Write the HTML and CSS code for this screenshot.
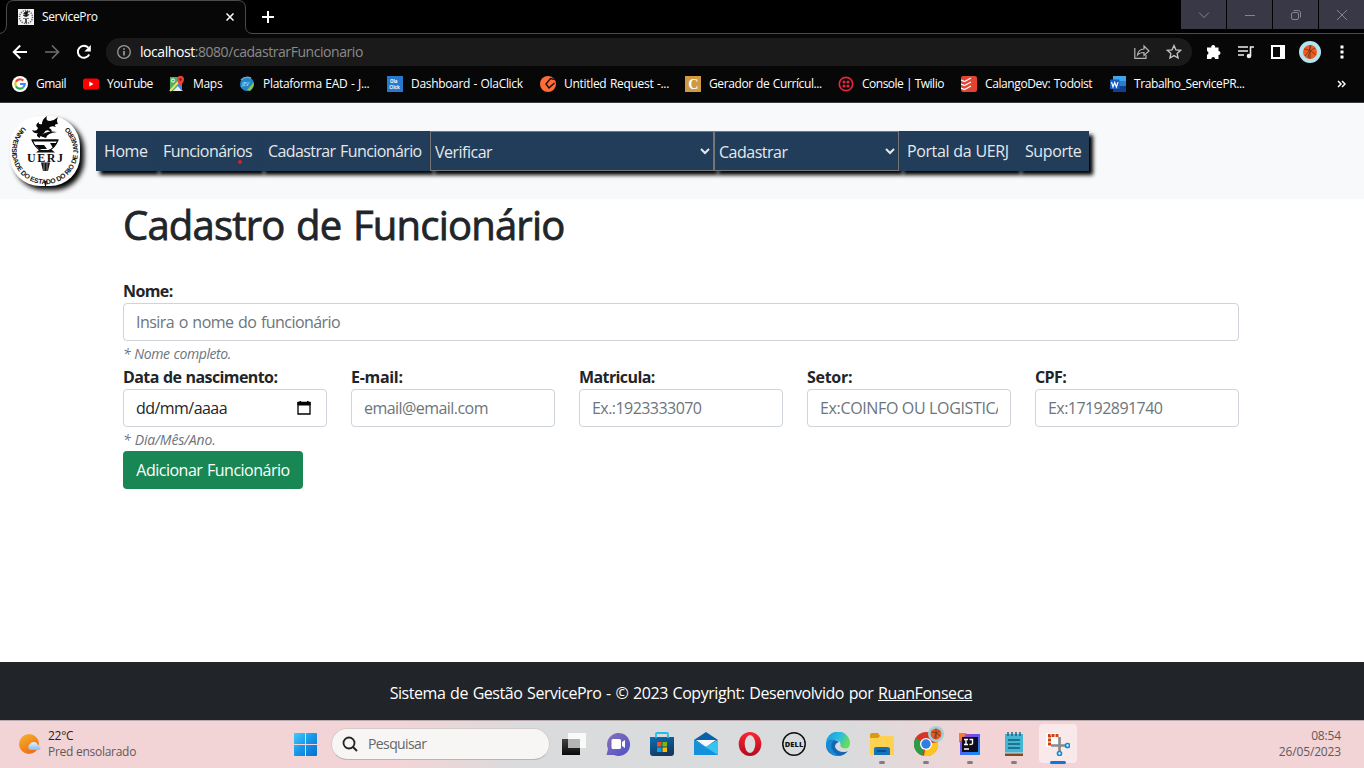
FILE: index.html
```html
<!DOCTYPE html>
<html lang="pt-BR">
<head>
<meta charset="utf-8">
<title>ServicePro</title>
<link rel="stylesheet" href="styles.css">
</head>
<body>
<div class="screen">
  <div class="tabstrip">
    <svg class="tab-shape" width="262" height="34" viewBox="0 0 262 34"><path d="M0 33.5Q6.500 32 6.500 25V8Q6.500 .5 14 .5H238Q245.500 .5 245.500 8V26Q245.500 33.500 253 33.500H262V34H0Z" fill="#070707"/><path d="M0 33.500Q6.500 32 6.500 25V8Q6.500 .5 14 .5H238Q245.500 .5 245.500 8V26Q245.500 33.500 253 33.500H262" fill="none" stroke="#4b4b4b"/></svg>
    <div class="tab">
      <svg width="16" height="16" viewBox="0 0 16 16"><rect width="16" height="16" fill="#f2f2f2"/><circle cx="8" cy="8" r="6.500" fill="none" stroke="#666" stroke-width="1.500" stroke-dasharray="1.200 1"/><path d="M5.500 4.500q2-3 5-2L9 5.500h2l-2 2H7L5 6h3zM5 9.500h6M7.500 10v4h1v-4" fill="#111" stroke="#333" stroke-width=".6"/></svg>
      <span class="tab-title">ServicePro</span>
      <svg class="tab-close" width="8" height="8" viewBox="0 0 8 8"><path d="M.5 .5l7 7M7.500 .5l-7 7" stroke="#fff" stroke-width="1.500"/></svg>
      <svg class="tab-new" width="12" height="12" viewBox="0 0 12 12"><path d="M6 0v12M0 6h12" stroke="#fff" stroke-width="2"/></svg>
    </div>
    <div class="winbuttons">
      <span><svg width="12" height="12"><path d="M1 3.500l5 5 5-5" /></svg></span>
      <span><svg width="12" height="12"><path d="M1 6.500h10"/></svg></span>
      <span><svg width="12" height="12"><rect x="1.500" y="3.500" width="7" height="7" rx="1.500"/><path d="M3.500 1.500H8Q10.500 1.500 10.500 4V8.500"/></svg></span>
      <span><svg width="12" height="12"><path d="M1 1l10 10M11 1L1 11"/></svg></span>
    </div>
  </div>

  <div class="toolbar">
    <svg width="16" height="16" viewBox="0 0 16 16" fill="none" stroke="#fff" stroke-width="1.900"><path d="M15 8H2M8.200 1.500L1.700 8l6.500 6.500"/></svg>
    <svg width="16" height="16" viewBox="0 0 16 16" fill="none" stroke="#6d6d6d" stroke-width="1.700"><path d="M1 8h13M8 1.500L14.500 8 8 14.500"/></svg>
    <svg width="16" height="16" viewBox="0 0 16 16"><path d="M13.200 10.500A6 6 0 1 1 12.300 3.700" fill="none" stroke="#fff" stroke-width="2"/><path d="M14.800 1v6.500H8.300z" fill="#fff"/></svg>
    <div class="omnibox">
      <svg width="16" height="16" viewBox="0 0 16 16"><circle cx="8" cy="8" r="6.300" fill="none" stroke="#9a9a9a" stroke-width="1.300"/><path d="M8 7v4.500M8 4.200v1.600" stroke="#aaa" stroke-width="1.500"/></svg>
      <span class="url"><b>localhost</b>:8080/cadastrarFuncionario</span>
      <svg class="share" width="16" height="16" viewBox="0 0 16 16" fill="none" stroke="#b5b5b5" stroke-width="1.200"><path d="M.8 4V14.300H12V11"/><path d="M3.500 11Q4 5.500 10 5V2l5 5-5 4.500V8.500Q5.500 8.500 3.500 11z"/></svg>
      <svg width="16" height="16" viewBox="0 0 16 16"><path d="M8 1.500l1.900 4.300 4.700.5-3.500 3.100 1 4.600L8 11.600 3.900 14l1-4.600L1.400 6.300l4.700-.5z" fill="none" stroke="#c4c4c4" stroke-width="1.300"/></svg>
    </div>
    <div class="actions">
      <svg width="16" height="16" viewBox="0 0 16 16"><path d="M1 3.500h4.300a2 2 0 1 1 3.800 0H12.500V7a2 2 0 1 1 0 4v4H9.100a1.900 1.900 0 0 0-3.800 0H1v-4.200a1.900 1.900 0 0 0 0-3.700z" fill="#fff"/></svg>
      <svg width="16" height="16" viewBox="0 0 16 16"><path d="M0 3h10M0 7h10M0 11h6M12.500 12V3H16" stroke="#eee" stroke-width="1.600" fill="none"/><circle cx="11" cy="12" r="2.300" fill="#eee"/></svg>
      <svg class="panel" width="14" height="14" viewBox="0 0 14 14"><path d="M0 0h14v14H0zM2 2v10h7V2z" fill="#fff" fill-rule="evenodd"/></svg>
      <svg class="avatar" width="22" height="22" viewBox="0 0 22 22"><circle cx="11" cy="11" r="11" fill="#b4e4ef"/><circle cx="11" cy="11" r="7" fill="#f05a1a"/><path d="M5 8q7 0 12 6M9 17Q10 9 16 7M11 4v14M6 15Q11 11 12 4" fill="none" stroke="#6d3a25" stroke-width=".9"/></svg>
      <svg class="dots" width="4" height="14" viewBox="0 0 4 14"><path d="M.5 .5h3v3h-3zM.5 5.500h3v3h-3zM.5 10.500h3v3h-3z" fill="#fff"/></svg>
    </div>
  </div>

  <div class="bookmarks">
    <span><svg viewBox="0 0 16 16"><circle cx="8" cy="8" r="8" fill="#fff"/><g fill="none" stroke-width="2.200"><path d="M11.300 4.600A4.700 4.700 0 0 0 3.900 5.700" stroke="#ea4335"/><path d="M3.900 5.700a4.700 4.700 0 0 0 0 4.600" stroke="#fbbc05"/><path d="M3.900 10.300a4.700 4.700 0 0 0 7.200 1.200" stroke="#34a853"/><path d="M11.100 11.500Q12.700 10 12.700 8H8" stroke="#4285f4"/></g></svg><i class="tight">Gmail</i></span>
    <span><svg viewBox="0 0 16 16"><rect y="2.500" width="16" height="11" rx="2.500" fill="#f00"/><path d="M6.300 5.500L10.500 8l-4.200 2.500z" fill="#fff"/></svg><i class="tight">YouTube</i></span>
    <span><svg viewBox="0 0 16 16"><path d="M1 1h12v14H1z" fill="#4caf64"/><path d="M4 15l5-5 5 5z" fill="#eee"/><path d="M7 8l6-4v11z" fill="#4285f4"/><path d="M1 15L12 3" stroke="#fdd663" stroke-width="2"/><circle cx="4" cy="4.500" r="1.600" fill="none" stroke="#fff"/><path d="M8 3.300a3.500 3.500 0 0 1 7 0Q15 6 11.500 10 8 6 8 3.300" fill="#ea4335"/><circle cx="11.500" cy="3.500" r="1.200" fill="#811"/></svg><i>Maps</i></span>
    <span><svg viewBox="0 0 16 16"><circle cx="8" cy="8" r="7" fill="#2486ca"/><path d="M11 15Q15 12 15 6L8 14z" fill="#8bc34a"/><path d="M2 4Q6 0 12 2" fill="none" stroke="#68a8cf" stroke-width="1.500"/><text x="3" y="9.500" font-size="5" fill="#d8f0ff" font-style="italic">JEV</text></svg><i>Plataforma EAD - J...</i></span>
    <span><svg viewBox="0 0 16 16"><path d="M0 0h16v16H0z" fill="#2878cd"/><text x="3" y="6.500" font-size="4.400" font-weight="700" fill="#fff">Ola</text><text x="2.300" y="12.500" font-size="4.400" font-weight="700" fill="#fff">Click</text></svg><i class="mid">Dashboard - OlaClick</i></span>
    <span><svg viewBox="0 0 16 16"><circle cx="8" cy="8" r="8" fill="#ff6c37"/><path d="M15 3.500L10.500 2.500 6 8l3 4 5.500-5M9 12l3-3" fill="none" stroke="#1a1210" stroke-width="1.400"/></svg><i>Untitled Request -...</i></span>
    <span><svg viewBox="0 0 16 16"><path d="M0 0h16v16H0z" fill="#d19a42"/><text class="serif" x="3.300" y="13" font-size="14" font-weight="700" fill="#fff">C</text></svg><i class="snug">Gerador de Currícul...</i></span>
    <span><svg viewBox="0 0 16 16"><circle cx="8" cy="8" r="6.700" fill="none" stroke="#e1283f" stroke-width="1.700"/><g fill="#e1283f"><circle cx="6" cy="6" r="1.600"/><circle cx="10" cy="6" r="1.600"/><circle cx="6" cy="10" r="1.600"/><circle cx="10" cy="10" r="1.600"/></g></svg><i class="tight">Console | Twilio</i></span>
    <span><svg viewBox="0 0 16 16"><rect width="16" height="16" rx="2" fill="#e44332"/><path d="M0 4l3.500 1.500L10 2M0 8l3.500 1.500L10 6M0 12l3.500 1.500L10 10" fill="none" stroke="#fff" stroke-width="1.200"/></svg><i class="snug">CalangoDev: Todoist</i></span>
    <span><svg viewBox="0 0 16 16"><path d="M3 0h13v5H3z" fill="#41a5ee"/><path d="M3 5h13v5H3z" fill="#2b7cd3"/><path d="M3 10h13v6H3z" fill="#103f91"/><path d="M0 3.500h9.500V13H0z" fill="#185abd"/><path d="M1.500 6l1.500 5 1.700-4.500L6.400 11 8 6" fill="none" stroke="#fff" stroke-width="1.200"/></svg><i class="snug">Trabalho_ServicePR...</i></span>
    <svg class="more" viewBox="0 0 9 8"><path d="M1 1l3 3-3 3M5 1l3 3-3 3" fill="none" stroke="#fff" stroke-width="1.500"/></svg>
  </div>

  <header class="site-header">
    <svg class="logo" width="70" height="70" viewBox="0 0 70 70">
      <defs><path id="ring" d="M13 10.500A33 33 0 1 0 57 10.500"/></defs>
      <text class="ring-text" textLength="158" lengthAdjust="spacing"><textPath href="#ring">UNIVERSIDADE DO ESTADO DO RIO DE JANEIRO</textPath></text>
      <path d="M22 14Q27 16 28 12 24 9 29 6 28 9 32 8 32 3 37 0 35 5 40 5 45 4 48 1 46 5 48 8 43 8 46 11 41 9 39 12 43 14 41 16 36 12 34 17 29 20 30 22 25 20 28 17 24 18 22 14zM30 20Q37 14 47 16 37 17 36 22z" fill="#080808"/>
      <path d="M22 24H48L46 28Q42 35 35 35 28 35 24 28z" fill="#fff" stroke="#080808" stroke-width="1.200"/><path d="M22 24.500H48" stroke="#080808" stroke-width="2"/><path d="M25 29h9l3 4h-8zM40 27h7l-4 5z" fill="#080808"/><path d="M29 34H42L45 36.500H26z" fill="#111"/>
      <text class="logo-name" x="17" y="45.500" textLength="36">UERJ</text>
      <path d="M31 46.500H40L38 55H33zM34 65h3l-1 5h-1z" fill="#151515"/><path d="M34 47v8M37 47v8" stroke="#888"/>
    </svg>
    <nav class="nav">
      <a class="n1"><span>Home</span></a>
      <a class="n2"><span>Funcionários</span></a>
      <a class="n3"><span>Cadastrar Funcionário</span></a>
      <div class="n4"><select><option>Verificar</option></select></div>
      <div class="n5"><select><option>Cadastrar</option></select></div>
      <a class="n6"><span>Portal da UERJ</span></a>
      <a class="n7"><span>Suporte</span></a>
      <i class="marker"></i>
    </nav>
  </header>

  <main class="content">
    <h1><span>Cadastro de Funcionário</span></h1>
    <div class="field">
      <label><span>Nome:</span></label>
      <input placeholder="Insira o nome do funcionário">
      <small><span>* Nome completo.</span></small>
    </div>
    <div class="row">
      <div class="field">
        <label><span>Data de nascimento:</span></label>
        <div class="date"><span>dd/mm/aaaa</span><svg width="14" height="14" viewBox="0 0 14 14"><path d="M1 1.500h12V13H1z" fill="none" stroke="#000" stroke-width="1.300"/><path d="M.5 1h13v3.500H.5zM2.500 0h1.600v2H2.500zM10 0h1.600v2H10z"/></svg></div>
        <small class="hint-date"><span>* Dia/Mês/Ano.</span></small>
      </div>
      <div class="field"><label class="loose"><span>E-mail:</span></label><input placeholder="email@email.com"></div>
      <div class="field"><label><span>Matricula:</span></label><input placeholder="Ex.:1923333070"></div>
      <div class="field"><label class="loose"><span>Setor:</span></label><input class="sector" placeholder="Ex:COINFO OU LOGISTICA"></div>
      <div class="field"><label><span>CPF:</span></label><input placeholder="Ex:17192891740"></div>
    </div>
    <button class="submit">Adicionar Funcionário</button>
  </main>

  <footer class="site-footer"><span>Sistema de Gestão ServicePro - © 2023 Copyright: Desenvolvido por <u>RuanFonseca</u></span></footer>

  <div class="taskbar">
    <div class="weather">
      <svg width="24" height="24" viewBox="0 0 24 24"><defs><linearGradient id="sun" x2=".6" y2="1"><stop stop-color="#f5b62c"/><stop offset="1" stop-color="#ee6c14"/></linearGradient><linearGradient id="cl" x2="0" y2="1"><stop stop-color="#e3f3ff"/><stop offset="1" stop-color="#86b9f3"/></linearGradient></defs><circle cx="11" cy="11" r="10" fill="url(#sun)"/><path d="M12 17a3.500 3.500 0 0 1 0-6 4.500 4.500 0 0 1 8 1 2.500 2.500 0 0 1 0 5z" fill="url(#cl)"/></svg>
      <div class="weather-text"><p class="temp">22°C</p><p class="cond">Pred ensolarado</p></div>
    </div>
    <svg class="start" width="23" height="23" viewBox="0 0 23 23"><defs><linearGradient id="win" x2="1" y2="1"><stop stop-color="#42cbfa"/><stop offset=".5" stop-color="#1696e8"/><stop offset="1" stop-color="#0670cf"/></linearGradient></defs><path d="M0 1q0-1 1-1h10v11H0zM12 0h10q1 0 1 1v10H12zM0 12h11v11H1q-1 0-1-1zM12 12h11v10q0 1-1 1H12z" fill="url(#win)"/></svg>
    <div class="search"><svg width="16" height="16" viewBox="0 0 16 16"><circle cx="7" cy="7" r="5.500" fill="none" stroke="#242424" stroke-width="1.800"/><path d="M11 11l4 4" stroke="#242424" stroke-width="2"/></svg><span>Pesquisar</span></div>
    <div class="apps">
      <span><svg viewBox="0 0 24 24"><defs><linearGradient id="tv" x2="0" y2="1"><stop stop-color="#42433e"/><stop offset="1" stop-color="#090909"/></linearGradient></defs><path d="M0 7h18v16H0z" fill="url(#tv)"/><path d="M6 1h18v15H6z" fill="#fff" fill-opacity=".82"/><path d="M6 7h12v9H6z" fill="#b4b4b4"/></svg></span>
      <span><svg viewBox="0 0 24 24"><defs><linearGradient id="ch" x2="1" y2="1"><stop stop-color="#8a72b8"/><stop offset="1" stop-color="#4c50ca"/></linearGradient></defs><path d="M.5 23L2 17A11.500 11.500 0 1 1 8 23z" fill="url(#ch)"/><rect x="5.500" y="7" width="9.500" height="10" rx="1.500" fill="#fff"/><path d="M16 10l3-2v8l-3-2z" fill="#fff"/></svg></span>
      <span><svg viewBox="0 0 24 24"><defs><linearGradient id="st" x2=".4" y2="1"><stop stop-color="#0871b5"/><stop offset="1" stop-color="#173765"/></linearGradient></defs><path d="M0 5h24v16q0 3-3 3H3q-3 0-3-3z" fill="url(#st)"/><path d="M6 6V2q0-1 1-1h10q1 0 1 1v4" fill="none" stroke="#24bce9" stroke-width="1.800"/><path d="M7 10h4.500v4.500H7z" fill="#f25022"/><path d="M12.500 10H17v4.500h-4.500z" fill="#7fba00"/><path d="M7 15.500h4.500V20H7z" fill="#00a4ef"/><path d="M12.500 15.500H17V20h-4.500z" fill="#ffb900"/></svg></span>
      <span><svg viewBox="0 0 24 24"><path d="M0 8L12 0l12 8-12 7z" fill="#0961ac"/><path d="M2 8h20L12 15z" fill="#f8f8f8"/><path d="M0 8l12 7 12-7v15H0z" fill="#29aee9"/><path d="M0 8l24 15H0z" fill="#1491da"/><path d="M12 15L24 8v15z" fill="#35c3f2"/></svg></span>
      <span><svg viewBox="0 0 24 24"><defs><linearGradient id="op" x2="0" y2="1"><stop stop-color="#fc2434"/><stop offset="1" stop-color="#b40b1d"/></linearGradient></defs><ellipse cx="12" cy="12" rx="11.300" ry="12" fill="url(#op)"/><ellipse cx="12" cy="12" rx="5.300" ry="9" fill="#dbdcdd"/></svg></span>
      <span><svg viewBox="0 0 24 24"><circle cx="12" cy="12" r="11.200" fill="none" stroke="#111" stroke-width="1.500"/><text x="2.700" y="14.800" font-size="7.500" font-weight="800" textLength="18.600" fill="#111">DELL</text></svg></span>
      <span><svg viewBox="0 0 24 24"><defs><linearGradient id="ed" x2="1" y2=".4"><stop stop-color="#1699db"/><stop offset=".6" stop-color="#29bde0"/><stop offset="1" stop-color="#68db5c"/></linearGradient></defs><path d="M0 12A12 12 0 0 1 24 11Q24 16.500 19 16.500 14 16 14.500 13 15 8 8 8 2 8 0 12z" fill="url(#ed)"/><path d="M0 12Q2 7 8 8 12 8.500 13 10 9 11 9 15 11 20 18 20 21 20 22.500 18.500 18 24 12 24 0 23 0 12z" fill="#1267b8"/><path d="M0 12Q2 7.500 8 8 3.500 13 6.500 18 9 22.500 14 23.800 8 25 3 20 0 16 0 12z" fill="#178cd5"/></svg></span>
      <span class="running"><svg viewBox="0 0 24 24"><path d="M0 3q0-2 2-2h6l2 3H22q2 0 2 2v17H0z" fill="#ffd153"/><path d="M0 3q0-2 2-2h6l2 3-2 2H0z" fill="#d99b16"/><path d="M4 23v-6q0-2 2-2h11q3 0 3 2v6z" fill="#1472b9"/><path d="M7 18h9v2H7z" fill="#0a4f8d"/></svg></span>
      <span class="running"><svg viewBox="0 0 24 24"><circle cx="12" cy="12" r="12" fill="#d93428"/><path d="M1.600 6L12 12 8 23.500A12 12 0 0 1 1.600 6z" fill="#2d9a48"/><path d="M12 12l12-2a12 12 0 0 1-14 14z" fill="#fbc61f"/><circle cx="12" cy="12" r="6" fill="#fff"/><circle cx="12" cy="12" r="4.700" fill="#2f7de2"/></svg><svg class="badge" viewBox="0 0 22 22"><circle cx="11" cy="11" r="11" fill="#9fd0d8"/><circle cx="11" cy="11" r="7.500" fill="#e8581f"/><path d="M5 8q7 0 12 6M9 17Q10 9 16 7M11 4v14" fill="none" stroke="#51342b"/></svg></span>
      <span class="running"><svg viewBox="0 0 24 24"><defs><linearGradient id="ij" x2=".7" y2="1"><stop stop-color="#c342a4"/><stop offset=".4" stop-color="#6551ef"/><stop offset="1" stop-color="#1688f7"/></linearGradient></defs><path d="M2 2h20v21H2z" fill="url(#ij)"/><path d="M1 1h8L1 11z" fill="#f3793a"/><path d="M4 5h16v15H4z" fill="#100d18"/><path d="M6 7.500h4M8 7.500v5M6 12.500h4M11.500 7.500h3v4q0 1-3 1" fill="none" stroke="#fff" stroke-width="1.400"/><path d="M6 17h5" stroke="#fff" stroke-width="1.500"/></svg></span>
      <span class="running"><svg viewBox="0 0 24 24"><path d="M3 2h18v19H3z" fill="#45b5d4"/><path d="M6 0v4M10 0v4M14 0v4M18 0v4" stroke="#225d73" stroke-width="1.400"/><path d="M6 8h12M6 12h12M6 16h12" stroke="#135e77" stroke-width="1.600"/><path d="M3 21h18v3H3z" fill="#874719"/><path d="M3 21h18" stroke="#ddd"/></svg></span>
      <span class="running active"><svg viewBox="0 0 24 24"><path d="M0 1h14v14H0z" fill="#fff"/><path d="M3.500 13.500V3.500H13.500" fill="none" stroke="#d1400c" stroke-width="3" stroke-dasharray="3 1"/><path d="M5 13.500h10M13.500 5v10M13.500 13.500h6M13.500 13.500v6" stroke="#858a8d" stroke-width="2.600"/><circle cx="21.500" cy="13.500" r="2" fill="#fff" stroke="#148ad5" stroke-width="1.700"/><circle cx="13.500" cy="21.500" r="2" fill="#fff" stroke="#148ad5" stroke-width="1.700"/></svg></span>
    </div>
    <div class="clock"><p>08:54</p><p class="day">26/05/2023</p></div>
  </div>
</div>
</body>
</html>
```
FILE: styles.css
```css
* { box-sizing: border-box; }
body { margin: 0; font: 16px/24px "Open Sans", "Noto Sans", sans-serif; color: #212529; }
svg { display: block; flex: none; }
p, h1 { margin: 0; }
.screen { width: 1364px; height: 768px; display: flex; flex-direction: column; overflow: hidden; background: #fff; }

/* browser chrome */
.tabstrip { position: relative; height: 34px; flex: none; display: flex; justify-content: space-between; background: #000; border-bottom: 1px solid #4b4b4b; }
.tab-shape { position: absolute; left: 0; top: 0; }
.tab { position: relative; display: flex; align-items: center; padding-left: 18px; }
.tab-title { width: 183px; margin-left: 8px; font-size: 12px; letter-spacing: -.35px; color: #fff; }
.tab-close { margin-left: 1px; }
.tab-new { margin-left: 28px; }
.winbuttons { display: flex; gap: 1px; height: 29px; }
.winbuttons span { width: 45px; display: flex; align-items: center; justify-content: center; background: #383846; }
.winbuttons svg { fill: none; stroke: #85858d; stroke-width: 1; }
.toolbar { height: 36px; flex: none; display: flex; align-items: center; gap: 16px; padding-left: 12px; background: #070707; }
.omnibox { width: 1086px; height: 28px; margin-left: -2px; border-radius: 14px; background: #1a1a1a; display: flex; align-items: center; padding: 0 10px; gap: 8px; }
.url { flex: 1; font-size: 14px; letter-spacing: -.44px; color: #8b8b8b; }
.url b { font-weight: 400; color: #fff; }
.share { margin-right: 8px; }
.actions { display: flex; align-items: center; gap: 16px; margin-left: -2px; }
.panel { margin-left: 1px; }
.avatar { margin-left: -2px; }
.dots { margin-left: 3px; }
.bookmarks { height: 33px; flex: none; display: grid; grid-template-columns: 71px 86px 70px 148px 153px 145px 153px 123px 149px 227px 9px; align-items: center; padding: 0 0 4px 12px; background: #070707; border-bottom: 1px solid #3c3c3c; }
.bookmarks span { display: flex; gap: 8px; align-items: center; font-size: 12px; color: #fff; white-space: nowrap; }
.bookmarks i { font-style: normal; letter-spacing: -.3px; word-spacing: .7px; }
.bookmarks .mid { letter-spacing: -.32px; }
.bookmarks .snug { letter-spacing: -.4px; }
.bookmarks .tight { letter-spacing: -.5px; word-spacing: 0; }
.bookmarks span svg { width: 16px; height: 16px; }
.more { width: 9px; height: 8px; }
.serif { font-family: "Liberation Serif", serif; }

/* page header */
.site-header { height: 96px; flex: none; display: flex; background: #f8f9fa; padding: 13px 0 0 10px; }
.logo { border-radius: 30px; background: #fff; box-shadow: 4px 4px 5px #000; }
.ring-text { font: 700 6.800px "Liberation Sans", sans-serif; fill: #111; }
.logo-name { font: 700 12px "Liberation Serif", serif; fill: #111; }
.nav { position: relative; height: 40px; margin: 15px 0 0 16px; display: flex; }
.nav a, .nav div { height: 40px; background: #213d59; color: #e6e8ea; box-shadow: 4px 4px 4px #000; white-space: nowrap; }
.nav a { padding: 8px; letter-spacing: -.4px; }
.nav select { width: 100%; height: 40px; display: block; background: #213d59; color: #e6e8ea; border: 1px solid #767676; border-radius: 0; font: 16px "Open Sans", sans-serif; letter-spacing: -.5px; padding: 2px 0 0; }
.n1 { width: 59px; }
.n2 { width: 105px; }
.n3 { width: 170px; }
.n4 { width: 284px; }
.n5 { width: 185px; }
.n6 { width: 118px; }
.n7 { width: 72px; }
.nav .n2 { letter-spacing: -.55px; }
.nav .n3 { letter-spacing: -.6px; word-spacing: 1px; }
.nav .n6 { word-spacing: .5px; }
.marker { position: absolute; left: 142px; top: 29px; width: 4px; height: 4px; border-radius: 50%; background: #e11b22; }

/* form */
.content { flex: 1; padding: 2px 125px 0 123px; }
h1 { font-size: 40px; line-height: 48px; font-weight: 400; letter-spacing: -.8px; word-spacing: 2px; -webkit-text-stroke: .8px #212529; margin-bottom: 30px; }
.field { display: flex; flex-direction: column; min-width: 0; }
label { height: 24px; line-height: 25px; font-weight: 700; letter-spacing: -.6px; word-spacing: .7px; white-space: nowrap; }
.loose { letter-spacing: -.3px; }
input, .date { width: 100%; height: 38px; border: 1px solid #ced4da; border-radius: 4px; padding: 6px 12px; font: 16px/24px "Open Sans", sans-serif; letter-spacing: -.55px; word-spacing: 1px; background: #fff; }
.sector { letter-spacing: -.35px; word-spacing: 0; }
input::placeholder { color: #6c757d; opacity: 1; }
.date { display: flex; align-items: center; justify-content: space-between; padding-right: 15px; }
small { height: 24px; font-size: 14px; font-style: italic; color: #6c757d; letter-spacing: -.4px; word-spacing: .7px; line-height: 26px; }
.hint-date { letter-spacing: -.15px; }
.row { display: grid; grid-template-columns: repeat(5, 204px); gap: 24px; }
.submit { display: block; width: 180px; height: 38px; padding: 0; border: 0; border-radius: 4px; background: #198754; color: #fff; font: 16px "Open Sans", sans-serif; letter-spacing: -.5px; word-spacing: 1px; }
.site-footer { height: 58px; flex: none; display: flex; align-items: center; justify-content: center; padding: 3px 2px 0 0; background: #212529; color: #fff; letter-spacing: -.45px; word-spacing: 1px; }

/* desktop taskbar */
.taskbar { height: 48px; flex: none; display: flex; align-items: center; border-top: 1px solid #b9a9ad; background: linear-gradient(90deg, #f2d4d6 0 400px, #dadbdd 520px 850px, #f2d4d6 980px); }
.weather { width: 276px; margin-right: 18px; display: flex; align-items: center; gap: 6px; padding-left: 18px; font-size: 12px; line-height: 16px; letter-spacing: -.27px; }
.weather-text { padding-bottom: 2px; }
.temp { color: #222; }
.cond { color: #62585a; }
.search { width: 219px; height: 32px; margin: 0 0 1px 14px; border-radius: 16px; border: 1px solid #d5cccd; border-bottom-color: #b8b4b5; background: #f8f5f5; display: flex; align-items: center; gap: 10px; padding: 0 0 1px 10px; font-size: 14px; letter-spacing: -.6px; color: #666; }
.apps { display: grid; grid-template-columns: repeat(12, 44px); margin: 0 0 1px 2px; }
.apps span { position: relative; height: 40px; display: flex; align-items: center; justify-content: center; }
.apps svg { width: 24px; height: 24px; }
.apps .badge { position: absolute; width: 16px; height: 16px; left: 24px; top: 2px; }
.running::after { content: ""; position: absolute; left: 19px; bottom: 0; width: 6px; height: 3px; border-radius: 2px; background: #817d7f; }
.active::before { content: ""; position: absolute; inset: 0 3px 1px; border-radius: 4px; background: #f9e9ea; }
.active svg { position: relative; }
.active::after { left: 14px; width: 16px; background: #0f78d4; }
.clock { margin-left: auto; padding: 0 23px 2px 0; text-align: right; font-size: 12px; line-height: 16px; letter-spacing: -.15px; color: #62585a; }
```
